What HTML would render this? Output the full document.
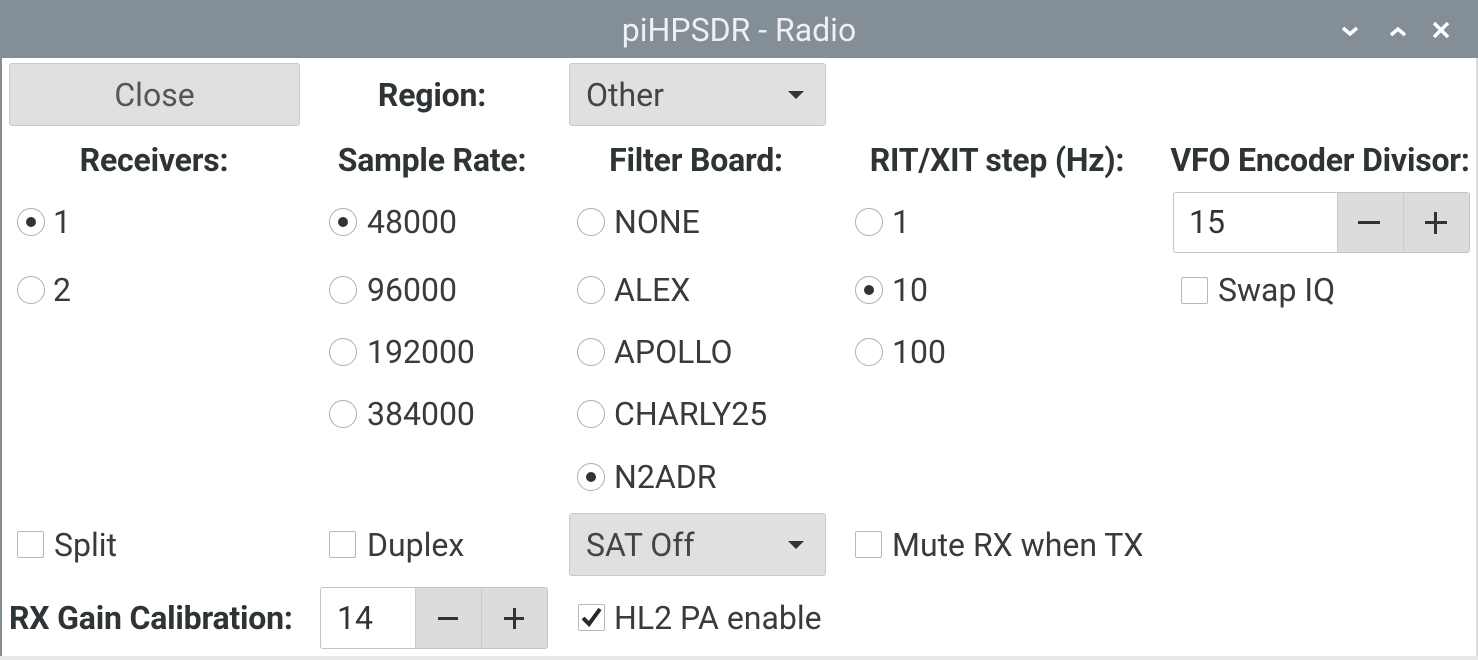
<!DOCTYPE html>
<html><head><meta charset="utf-8"><style>
*{margin:0;padding:0;box-sizing:border-box}
body{width:1478px;height:660px;background:#fff;font-family:"Roboto","Liberation Sans",sans-serif;color:#3a3a3a;position:relative;overflow:hidden}
.a{position:absolute;white-space:nowrap}
.t{font-size:32px;line-height:40px}
.b{font-weight:bold;font-size:32px;line-height:40px;color:#2e3436;letter-spacing:-0.2px}
.btn{position:absolute;background:#e0e0e0;border:1px solid #c9c9c9;border-radius:3px}
.r{position:absolute;width:28px;height:28px;border:1.5px solid #b0b0b0;border-radius:50%;background:#fff}
.r.on::after{content:"";position:absolute;left:8px;top:8px;width:10px;height:10px;border-radius:50%;background:#333}
.c{position:absolute;width:27px;height:27px;border:1.5px solid #b8b8b8;border-radius:2px;background:#fff}
.arr{position:absolute;width:0;height:0;border-left:8px solid transparent;border-right:8px solid transparent;border-top:8px solid #333}
</style></head><body>
<div class="a" style="left:0;top:0;width:1478px;height:58px;background:#848e96"></div>
<div class="a" style="left:0;top:10px;width:1478px;text-align:center;font-size:32px;line-height:40px;color:#eef0f2">piHPSDR - Radio</div>
<svg class="a" style="left:1340px;top:20px" width="120" height="22" viewBox="0 0 120 22">
<path d="M3 8 L10 14 L17 8" stroke="#fff" stroke-width="3.5" fill="none"/>
<path d="M51 15 L58 9 L65 15" stroke="#fff" stroke-width="3.5" fill="none"/>
<path d="M94 3 L108 17 M108 3 L94 17" stroke="#fff" stroke-width="3.5" fill="none"/>
</svg>
<div class="a" style="left:0;top:58px;width:2px;height:600px;background:#848e96"></div>
<div class="a" style="left:1476px;top:58px;width:2px;height:600px;background:#ddd"></div>
<div class="a" style="left:0;top:656px;width:1478px;height:4px;background:#e8e8e8"></div>

<div class="btn" style="left:9px;top:63px;width:291px;height:63px"></div>
<div class="a t" style="left:9px;top:75px;width:291px;text-align:center;color:#555">Close</div>
<div class="a b" style="left:332px;top:75px;width:200px;text-align:center">Region:</div>
<div class="btn" style="left:569px;top:63px;width:257px;height:63px"></div>
<div class="a t" style="left:586px;top:75px;color:#444">Other</div>
<div class="arr" style="left:788px;top:91px"></div>

<div class="a b" style="left:34px;top:140px;width:240px;text-align:center">Receivers:</div>
<div class="a b" style="left:302px;top:140px;width:260px;text-align:center">Sample Rate:</div>
<div class="a b" style="left:566px;top:140px;width:260px;text-align:center">Filter Board:</div>
<div class="a b" style="left:827px;top:140px;width:340px;text-align:center">RIT/XIT step (Hz):</div>
<div class="a b" style="left:1150px;top:140px;width:340px;text-align:center">VFO Encoder Divisor:</div>

<div class="r on" style="left:17px;top:208px"></div><div class="a t" style="left:53px;top:202px">1</div>
<div class="r" style="left:17px;top:276px"></div><div class="a t" style="left:53px;top:270px">2</div>

<div class="r on" style="left:329px;top:208px"></div><div class="a t" style="left:367px;top:202px">48000</div>
<div class="r" style="left:329px;top:276px"></div><div class="a t" style="left:367px;top:270px">96000</div>
<div class="r" style="left:329px;top:338px"></div><div class="a t" style="left:367px;top:332px">192000</div>
<div class="r" style="left:329px;top:400px"></div><div class="a t" style="left:367px;top:394px">384000</div>

<div class="r" style="left:577px;top:208px"></div><div class="a t" style="left:614px;top:202px">NONE</div>
<div class="r" style="left:577px;top:276px"></div><div class="a t" style="left:614px;top:270px">ALEX</div>
<div class="r" style="left:577px;top:338px"></div><div class="a t" style="left:614px;top:332px">APOLLO</div>
<div class="r" style="left:577px;top:400px"></div><div class="a t" style="left:614px;top:394px">CHARLY25</div>
<div class="r on" style="left:577px;top:463px"></div><div class="a t" style="left:614px;top:457px">N2ADR</div>

<div class="r" style="left:855px;top:208px"></div><div class="a t" style="left:892px;top:202px">1</div>
<div class="r on" style="left:855px;top:276px"></div><div class="a t" style="left:892px;top:270px">10</div>
<div class="r" style="left:855px;top:338px"></div><div class="a t" style="left:892px;top:332px">100</div>

<div class="a" style="left:1173px;top:192px;width:297px;height:61px;border:1.5px solid #c4c4c4;border-radius:3px;background:#fff;overflow:hidden">
<div class="a" style="left:163px;top:0;width:66px;height:60px;background:#dcdcdc;border-left:1px solid #ccc"></div>
<div class="a" style="left:229px;top:0;width:66px;height:60px;background:#dcdcdc;border-left:1px solid #ccc"></div>
<div class="a" style="left:184px;top:28px;width:22px;height:3px;background:#333"></div>
<div class="a" style="left:251px;top:28px;width:22px;height:3px;background:#333"></div>
<div class="a" style="left:260px;top:19px;width:3px;height:22px;background:#333"></div>
</div>
<div class="a t" style="left:1189px;top:202px;color:#333">15</div>
<div class="c" style="left:1181px;top:277px"></div><div class="a t" style="left:1218px;top:270px">Swap IQ</div>

<div class="c" style="left:17px;top:531px"></div><div class="a t" style="left:54px;top:525px">Split</div>
<div class="c" style="left:329px;top:531px"></div><div class="a t" style="left:367px;top:525px">Duplex</div>
<div class="btn" style="left:569px;top:513px;width:257px;height:63px"></div>
<div class="a t" style="left:586px;top:525px;color:#444">SAT Off</div>
<div class="arr" style="left:788px;top:541px"></div>
<div class="c" style="left:855px;top:531px"></div><div class="a t" style="left:892px;top:525px">Mute RX when TX</div>

<div class="a b" style="left:9px;top:598px">RX Gain Calibration:</div>
<div class="a" style="left:320px;top:587px;width:228px;height:62px;border:1.5px solid #c4c4c4;border-radius:3px;background:#fff;overflow:hidden">
<div class="a" style="left:94px;top:0;width:66px;height:60px;background:#dcdcdc;border-left:1px solid #ccc"></div>
<div class="a" style="left:160px;top:0;width:66px;height:60px;background:#dcdcdc;border-left:1px solid #ccc"></div>
<div class="a" style="left:117px;top:29px;width:20px;height:3px;background:#333"></div>
<div class="a" style="left:183px;top:29px;width:20px;height:3px;background:#333"></div>
<div class="a" style="left:191.5px;top:20px;width:3px;height:21px;background:#333"></div>
</div>
<div class="a t" style="left:337px;top:598px;color:#333">14</div>
<div class="c" style="left:578px;top:604px"></div>
<svg class="a" style="left:578px;top:604px" width="27" height="27"><path d="M5 14 L11 20 L22 5" stroke="#2a2a2a" stroke-width="4" fill="none"/></svg>
<div class="a t" style="left:614px;top:598px">HL2 PA enable</div>
</body></html>
